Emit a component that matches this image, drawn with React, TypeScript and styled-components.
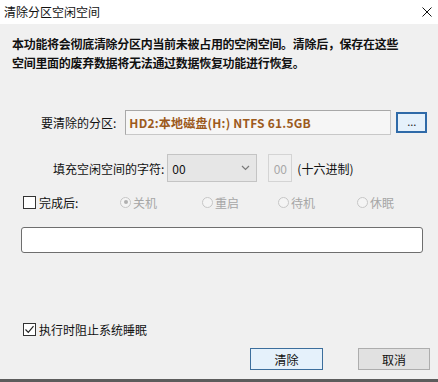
import styled, { createGlobalStyle } from "styled-components";

const GlobalStyle = createGlobalStyle`
    html, body {
        margin: 0;
        padding: 0;
        background: #f0f0f0;
    }
    body {
        font-family: "Noto Sans CJK SC", "Noto Sans", sans-serif;
        font-size: 12px;
        color: #000;
    }
`;

const App = () => {
    return (
        <Window>
            <GlobalStyle />
            <TitleBar>
                <TitleText>清除分区空闲空间</TitleText>
                <CloseIcon viewBox="0 0 10 10">
                    <path d="M0.5 0.5 L9.5 9.5 M9.5 0.5 L0.5 9.5" stroke="#111" strokeWidth="1" fill="none" />
                </CloseIcon>
            </TitleBar>

            <Body>
                <Description>
                    本功能将会彻底清除分区内当前未被占用的空闲空间。清除后，保存在这些<br />
                    空间里面的废弃数据将无法通过数据恢复功能进行恢复。
                </Description>

                <PartitionRow>
                    <FieldLabel $gap={9}>要清除的分区:</FieldLabel>
                    <PartitionField>HD2:本地磁盘(H:) NTFS 61.5GB</PartitionField>
                    <BrowseButton>...</BrowseButton>
                </PartitionRow>

                <FillRow>
                    <FieldLabel $gap={3}>填充空闲空间的字符:</FieldLabel>
                    <Combo>
                        <span>00</span>
                        <svg width="9" height="6" viewBox="0 0 9 6">
                            <path d="M1 1 L4.5 4.5 L8 1" stroke="#7a7a7a" strokeWidth="1.2" fill="none" />
                        </svg>
                    </Combo>
                    <HexBox>00</HexBox>
                    <HexHint>(十六进制)</HexHint>
                </FillRow>

                <AfterRow>
                    <CheckLabel $width={97}>
                        <CheckBox />
                        完成后:
                    </CheckLabel>
                    <RadioItem $width={82}>
                        <Radio $checked />关机
                    </RadioItem>
                    <RadioItem $width={76}>
                        <Radio />重启
                    </RadioItem>
                    <RadioItem $width={79}>
                        <Radio />待机
                    </RadioItem>
                    <RadioItem $width={70}>
                        <Radio />休眠
                    </RadioItem>
                </AfterRow>

                <ProgressBox />

                <PreventRow>
                    <CheckLabel>
                        <CheckBox>
                            <svg width="11" height="11" viewBox="0 0 11 11">
                                <path d="M1.5 5.5 L4.3 8.3 L9.5 2.2" stroke="#222" strokeWidth="1.2" fill="none" />
                            </svg>
                        </CheckBox>
                        执行时阻止系统睡眠
                    </CheckLabel>
                </PreventRow>

                <ButtonRow>
                    <DialogButton $primary>清除</DialogButton>
                    <DialogButton>取消</DialogButton>
                </ButtonRow>
            </Body>
        </Window>
    )
}

export default App;

const Window = styled.div`
    width: 438px;
    height: 382px;
    display: flex;
    flex-direction: column;
    background: #f0f0f0;
    box-sizing: border-box;
    border-bottom: 3px solid #5c5c5c;
    overflow: hidden;
`;

const TitleBar = styled.div`
    height: 24px;
    background: #ffffff;
    display: flex;
    align-items: center;
    justify-content: space-between;
    padding: 0 5px 0 4px;
`;

const TitleText = styled.div`
    font-size: 12px;
    color: #111;
    line-height: 1;
`;

const CloseIcon = styled.svg`
    width: 10px;
    height: 10px;
    margin-right: 1px;
`;

const Body = styled.div`
    flex: 1;
    display: flex;
    flex-direction: column;
    padding: 10px 0 0 0;
`;

const Description = styled.div`
    padding-left: 12px;
    font-weight: 700;
    font-size: 12px;
    line-height: 19px;
    letter-spacing: -0.3px;
    color: #111;
    white-space: nowrap;
`;

const PartitionRow = styled.div`
    display: flex;
    align-items: center;
    margin-top: 38px;
    padding-left: 41px;
    height: 25px;
`;

const FieldLabel = styled.div<{ $gap: number }>`
    font-size: 12px;
    color: #111;
    white-space: nowrap;
    margin-right: ${(p) => p.$gap}px;
`;

const PartitionField = styled.div`
    width: 266px;
    height: 25px;
    box-sizing: border-box;
    border: 1px solid #c8c8c8;
    border-top-color: #a8a8a8;
    border-left-color: #a8a8a8;
    background: #f6f6f6;
    display: flex;
    align-items: center;
    padding-left: 3px;
    font-weight: 700;
    letter-spacing: 0.2px;
    color: #9c5a1c;
    white-space: nowrap;
`;

const BrowseButton = styled.div`
    width: 31px;
    height: 21px;
    box-sizing: border-box;
    margin-left: 5px;
    border: 2px solid #2f6aa8;
    background: #e5f1fb;
    display: flex;
    align-items: center;
    justify-content: center;
    font-size: 11px;
    color: #222;
    line-height: 1;
    padding-bottom: 3px;
`;

const FillRow = styled.div`
    display: flex;
    align-items: center;
    margin-top: 19px;
    padding-left: 53px;
    height: 28px;
`;

const Combo = styled.div`
    width: 90px;
    height: 28px;
    box-sizing: border-box;
    border: 1px solid #c4c4c4;
    background: #e6e6e6;
    display: flex;
    align-items: center;
    justify-content: space-between;
    padding: 0 6px 0 4px;
    color: #111;
`;

const HexBox = styled.div`
    width: 24px;
    height: 28px;
    box-sizing: border-box;
    margin-left: 11px;
    border: 1px solid #d4d4d4;
    background: #f0f0f0;
    display: flex;
    align-items: center;
    justify-content: center;
    color: #a8a8a8;
`;

const HexHint = styled.div`
    margin-left: 5px;
    color: #111;
`;

const AfterRow = styled.div`
    display: flex;
    align-items: center;
    margin-top: 12px;
    padding-left: 23px;
    height: 16px;
`;

const CheckLabel = styled.label<{ $width?: number }>`
    display: flex;
    align-items: center;
    width: ${(p) => (p.$width ? `${p.$width}px` : "auto")};
    color: #111;
    white-space: nowrap;
`;

const CheckBox = styled.span`
    width: 13px;
    height: 13px;
    box-sizing: border-box;
    border: 1px solid #333;
    background: #fff;
    margin-right: 3px;
    display: flex;
    align-items: center;
    justify-content: center;
`;

const RadioItem = styled.label<{ $width: number }>`
    display: flex;
    align-items: center;
    width: ${(p) => p.$width}px;
    color: #a6a6a6;
    white-space: nowrap;
`;

const Radio = styled.span<{ $checked?: boolean }>`
    width: 11px;
    height: 11px;
    box-sizing: border-box;
    border-radius: 50%;
    border: 1px solid #c6c6c6;
    background: #f4f4f4;
    margin-right: 2px;
    position: relative;

    &::after {
        content: "";
        display: ${(p) => (p.$checked ? "block" : "none")};
        position: absolute;
        left: 2.5px;
        top: 2.5px;
        width: 4px;
        height: 4px;
        border-radius: 50%;
        background: #b0b0b0;
    }
`;

const ProgressBox = styled.div`
    margin: 17px 15px 0 21px;
    height: 26px;
    box-sizing: border-box;
    border: 1px solid #6e6e6e;
    border-radius: 3px;
    background: #ffffff;
`;

const PreventRow = styled.div`
    display: flex;
    align-items: center;
    margin-top: 68px;
    padding-left: 23px;
    height: 16px;
`;

const ButtonRow = styled.div`
    display: flex;
    justify-content: flex-end;
    gap: 35px;
    margin-top: 11px;
    padding-right: 8px;
`;

const DialogButton = styled.div<{ $primary?: boolean }>`
    width: ${(p) => (p.$primary ? "73px" : "72px")};
    height: 22px;
    box-sizing: border-box;
    border: 1px solid ${(p) => (p.$primary ? "#3c6e9c" : "#adadad")};
    background: ${(p) => (p.$primary ? "#e5f1fb" : "#e1e1e1")};
    display: flex;
    align-items: center;
    justify-content: center;
    color: #111;
    font-size: 12px;
`;
